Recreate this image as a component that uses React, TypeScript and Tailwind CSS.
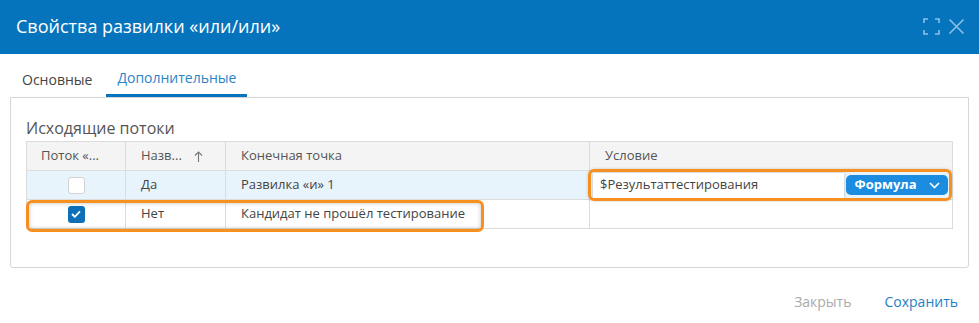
import React from "react";

export default function App() {
  const font = { fontFamily: '"Open Sans", "Noto Sans", sans-serif' };
  return (
    <div className="w-[979px] h-[323px] bg-white flex flex-col overflow-hidden" style={font}>
      <div className="h-[54px] bg-[#0674bd] flex items-center justify-between pl-4 pr-[14px] shrink-0">
        <div className="text-white text-[18px] leading-none pb-[2px]">Свойства развилки «или/или»</div>
        <div className="flex items-center gap-[8px] pb-[2px]">
          <svg width="17" height="17" viewBox="0 0 17 17" fill="none" stroke="#8cc0e6" strokeWidth="1.6">
            <path d="M1 5V1h4M12 1h4v4M16 12v4h-4M5 16H1v-4" />
          </svg>
          <svg width="17" height="17" viewBox="0 0 17 17" fill="none" stroke="#8cc0e6" strokeWidth="1.6">
            <path d="M1.5 1.5l14 14M15.5 1.5l-14 14" />
          </svg>
        </div>
      </div>
      <div className="h-[43px] flex items-end pl-[12px] shrink-0">
        <div className="px-[10px] h-full flex items-center pt-[7px] text-[14px] text-[#444]">Основные</div>
        <div className="ml-[4px] px-[11px] h-full flex items-center pt-[7px] text-[14px] text-[#2a84c9] border-b-[3px] border-[#0674bd]">Дополнительные</div>
      </div>
      <div className="mx-[10px] h-[171px] border border-[#d6d6d6] rounded-b-[3px] px-[15px] shrink-0">
        <div className="text-[16px] text-[#555] mt-[22px] leading-none">Исходящие потоки</div>
        <div className="relative mt-[5px]">
          <div className="border border-[#dcdcdc] border-b-0 text-[13px] text-[#444]">
            <div className="grid grid-cols-[99px_100px_364px_1fr] h-[29px] bg-[#f4f4f4] border-b border-[#dcdcdc] text-[#555]">
              <div className="flex items-center pl-[14px] border-r border-[#dcdcdc]">Поток «...</div>
              <div className="flex items-center pl-[15px] border-r border-[#dcdcdc]">
                Назв...
                <svg className="ml-[12px]" width="9" height="11" viewBox="0 0 9 11" fill="none" stroke="#777" strokeWidth="1.1">
                  <path d="M4.5 11V1M1 4.5L4.5 1 8 4.5" />
                </svg>
              </div>
              <div className="flex items-center pl-[15px] border-r border-[#dcdcdc]">Конечная точка</div>
              <div className="flex items-center pl-[15px]">Условие</div>
            </div>
            <div className="grid grid-cols-[99px_100px_364px_1fr] h-[29px] bg-[#e8f4fc] border-b border-[#dcdcdc]">
              <div className="flex items-center justify-center border-r border-[#dcdcdc]">
                <div className="w-[17px] h-[17px] rounded-[3px] bg-white border border-[#d2d2d2]" />
              </div>
              <div className="flex items-center pl-[15px] border-r border-[#dcdcdc]">Да</div>
              <div className="flex items-center pl-[15px] border-r border-[#dcdcdc]">Развилка «и» 1</div>
              <div className="flex items-center pl-[3px] pr-[4px]">
                <div className="flex-1 h-[25px] bg-white flex items-center pl-[7px] text-[#444] shadow-[0_0_3px_rgba(0,0,0,0.25)]">$Результаттестирования</div>
                <div className="w-[102px] h-[20px] ml-[2px] rounded-[5px] bg-[#1b8ce0] flex items-center justify-center gap-[12px] text-white font-bold text-[13px]">
                  <span>Формула</span>
                  <svg width="11" height="7" viewBox="0 0 11 7" fill="none" stroke="white" strokeWidth="1.6">
                    <path d="M1 1l4.5 4.5L10 1" />
                  </svg>
                </div>
              </div>
            </div>
            <div className="grid grid-cols-[99px_100px_364px_1fr] h-[29px] bg-white border-b border-[#dcdcdc]">
              <div className="flex items-center justify-center border-r border-[#dcdcdc]">
                <div className="w-[17px] h-[17px] rounded-[3px] bg-[#0d6fb8] flex items-center justify-center">
                  <svg width="10" height="8" viewBox="0 0 10 8" fill="none" stroke="white" strokeWidth="1.8">
                    <path d="M1 4l2.8 2.8L9 1.3" />
                  </svg>
                </div>
              </div>
              <div className="flex items-center pl-[15px] border-r border-[#dcdcdc]">Нет</div>
              <div className="flex items-center pl-[15px] border-r border-[#dcdcdc]">Кандидат не прошёл тестирование</div>
              <div />
            </div>
          </div>
          <div className="absolute left-0 top-[59px] w-[458px] h-[32px] rounded-[6px] border-[3px] border-[#f7901e] shadow-[inset_0_0_4px_rgba(0,0,0,0.25)]" />
          <div className="absolute left-[562px] top-[28px] w-[364px] h-[32px] rounded-[6px] border-[3px] border-[#f7901e] shadow-[0_0_3px_rgba(0,0,0,0.2)]" />
        </div>
      </div>
      <div className="flex justify-end items-center gap-[33px] pr-[21px] pt-[23px] text-[14px]">
        <span className="text-[#aaaaaa]">Закрыть</span>
        <span className="text-[#1f7fc4]">Сохранить</span>
      </div>
    </div>
  );
}
